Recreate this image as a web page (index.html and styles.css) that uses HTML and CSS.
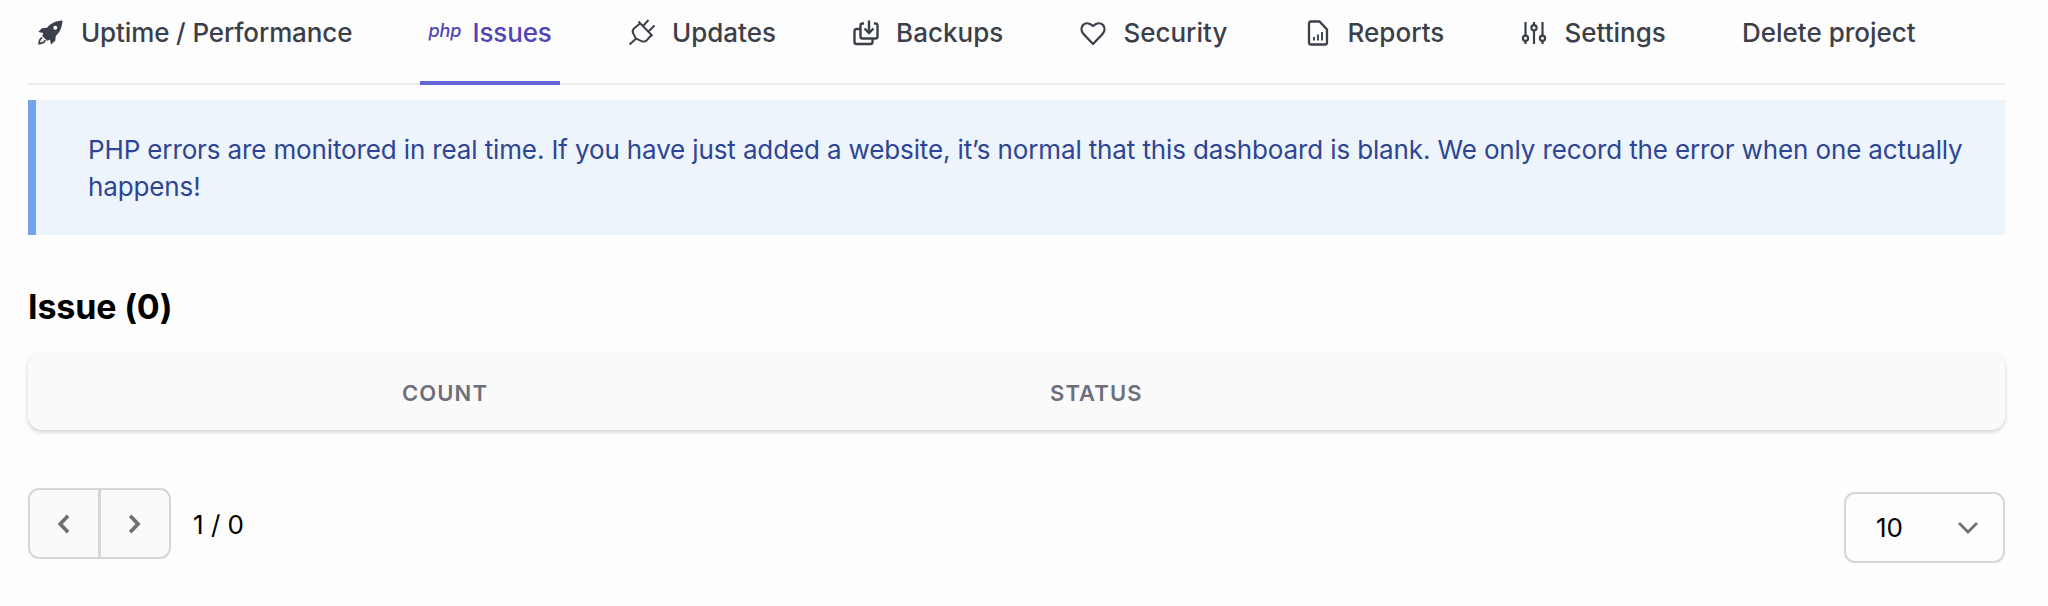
FILE: index.html
```
<!DOCTYPE html>
<html lang="en">
<head>
<meta charset="utf-8">
<title>Issues</title>
<link rel="stylesheet" href="styles.css">
</head>
<body>
<main class="page">
  <nav class="tabs">
    <a class="tab tab-uptime"><svg class="icon" viewBox="0 0 28 28"><path fill="currentColor" d="M27.500 1.500C20 2 15 4.500 11.500 9L6 9.500 2.500 13.500l5 1-1 3 5 5 3-1 1 5 4.500-4 .5-5C24.500 14 27 9 27.500 1.500z"/><circle cx="20" cy="9" r="2.100" fill="#fdfdfd"/><path d="M6.500 19.500c-2.500 0-3 3-3.300 6 3-.3 6-1 6.300-3.500" fill="none" stroke="currentColor" stroke-width="1.800"/></svg><span>Uptime / Performance</span></a>
    <a class="tab tab-issues active"><i class="php">php</i><span>Issues</span></a>
    <a class="tab tab-updates"><svg class="icon" viewBox="0 0 28 28" fill="none" stroke="currentColor" stroke-width="1.900"><path d="M1.500 25.500l6.800-6M10.500 2.500l14 14.500M12 4.500L6 9.500Q3.500 12 5.500 15l2.500 4.500 6.500 3Q17 23 19 21l4.500-5M15 7l5.500-6M20.500 12.500l6-6"/></svg><span>Updates</span></a>
    <a class="tab tab-backups"><svg class="icon" viewBox="0 0 28 28" fill="none" stroke="currentColor" stroke-width="2.400"><path d="M12 4.500h-1.500q-2 0-2 2v11q0 2 2 2H23.500q2 0 2-2v-11q0-2-2-2H22M17 1.500v12M12.500 9.500l4.500 4.500 4.500-4.500M8 10H4.500q-2 0-2 2v11q0 2 2 2H18.500q2 0 2-2v-3"/></svg><span>Backups</span></a>
    <a class="tab tab-security"><svg class="icon" viewBox="0 0 28 28" fill="none" stroke="currentColor" stroke-width="2.300" stroke-linejoin="round"><path d="M14 25L4.500 15C-1 8.500 6 0 14 7 22 0 29 8.500 23.500 15z"/></svg><span>Security</span></a>
    <a class="tab tab-reports"><svg class="icon" viewBox="0 0 28 28" fill="none" stroke="currentColor" stroke-width="2.300"><path d="M7 2.500h8.500L23 10.500v13q0 2-2 2H7q-2 0-2-2v-19q0-2 2-2z"/><path d="M10 21.500v-3.500M14 21.500v-6M18 21.500v-8.500" stroke-width="1.900"/></svg><span>Reports</span></a>
    <a class="tab tab-settings"><svg class="icon" viewBox="0 0 28 28" fill="none" stroke="currentColor" stroke-width="2.200"><path d="M5.500 3v13.500M5.500 22v3M14 3v3M14 11.500V25M22.500 3v13.500M22.500 22v3"/><circle cx="5.500" cy="19.200" r="2.600"/><circle cx="14" cy="8.800" r="2.600"/><circle cx="22.500" cy="19.200" r="2.600"/></svg><span>Settings</span></a>
    <a class="tab tab-delete"><span>Delete project</span></a>
  </nav>
  <p class="notice">PHP errors are monitored in real time. If you have just added a website, it’s normal that this dashboard is blank. We only record the error when one actually happens!</p>
  <h1 class="title">Issue (0)</h1>
  <div class="table-head"><span class="count">Count</span><span>Status</span></div>
  <footer class="footer">
    <div class="pager">
      <button class="page-btn" aria-label="Previous"><svg viewBox="0 0 20 20"><path d="M12.700 4.500L7.500 10l5.200 5.500"/></svg></button><button class="page-btn" aria-label="Next"><svg viewBox="0 0 20 20"><path d="M6.800 4.500L12 10l-5.200 5.500"/></svg></button>
      <span class="page-count">1 / 0</span>
    </div>
    <div class="select"><span>10</span><svg viewBox="0 0 20 12"><path d="M1 1l9 9 9-9"/></svg></div>
  </footer>
</main>
</body>
</html>
```
FILE: styles.css
```
* { box-sizing: border-box; }
body { margin: 0; background: #fdfdfd; font-family: Inter, "Liberation Sans", sans-serif; color: #000; }
.page { padding: 0 43px 0 28px; }
.tabs { display: flex; gap: 60.200px; height: 85px; border-bottom: 2px solid #ebebed; }
.tab { display: flex; height: 85px; padding: 0 8px 20px; align-items: center; font-size: 26px; font-weight: 500; color: #3b3f4a; white-space: nowrap; flex: none; }
.tab .icon { width: 28px; height: 28px; margin-right: 16px; }
.tab-uptime, .tab-issues { letter-spacing: -.13px; }
.tab-uptime .icon { width: 27px; height: 27px; margin-right: 18px; }
.active { color: #5145b5; border-bottom: 4px solid #6466d8; padding-bottom: 16px; }
.php { font-size: 18px; line-height: 24px; width: 30px; margin: -4px 14px 0 0; }
.notice { margin: 15px 0 0; height: 135px; padding: 31px 20px 0 52px; border-left: 8px solid #74a5ec; background: #edf4fb; color: #2d4594; font-size: 26px; line-height: 37px; letter-spacing: -.13px; }
.title { margin: 51px 0 0; font-size: 34px; line-height: 42px; font-weight: 700; letter-spacing: -.15px; }
.table-head { display: flex; margin-top: 25px; height: 77px; padding-top: 2px; border-radius: 14px; background: #fafafb; box-shadow: 0 2px 4px rgba(0,0,0,.18); align-items: center; font-size: 22px; font-weight: 600; letter-spacing: 1.100px; text-transform: uppercase; color: #6d707a; }
.count { width: 1022px; padding-left: 374px; }
.footer { display: flex; justify-content: space-between; margin-top: 58px; }
.pager { display: flex; height: 71px; align-items: center; }
.page-btn { width: 72px; height: 71px; border: 2px solid #d5d6d9; background: #fafafb; padding: 0; display: flex; align-items: center; justify-content: center; border-radius: 11px 0 0 11px; }
.page-btn + .page-btn { width: 72px; margin-left: -1px; border-radius: 0 11px 11px 0; }
.page-btn svg { width: 30px; height: 30px; fill: none; stroke: #6f7076; stroke-width: 2.500; }
.page-count { margin-left: 22px; padding-top: 2px; font-size: 26px; }
.select { width: 161px; height: 71px; margin-top: 4px; border: 2px solid #d5d6d9; border-radius: 11px; display: flex; align-items: center; justify-content: space-between; padding: 0 25px 0 30px; font-size: 26px; }
.select svg { width: 20px; height: 12px; fill: none; stroke: #6f7076; stroke-width: 2.800; }
```
